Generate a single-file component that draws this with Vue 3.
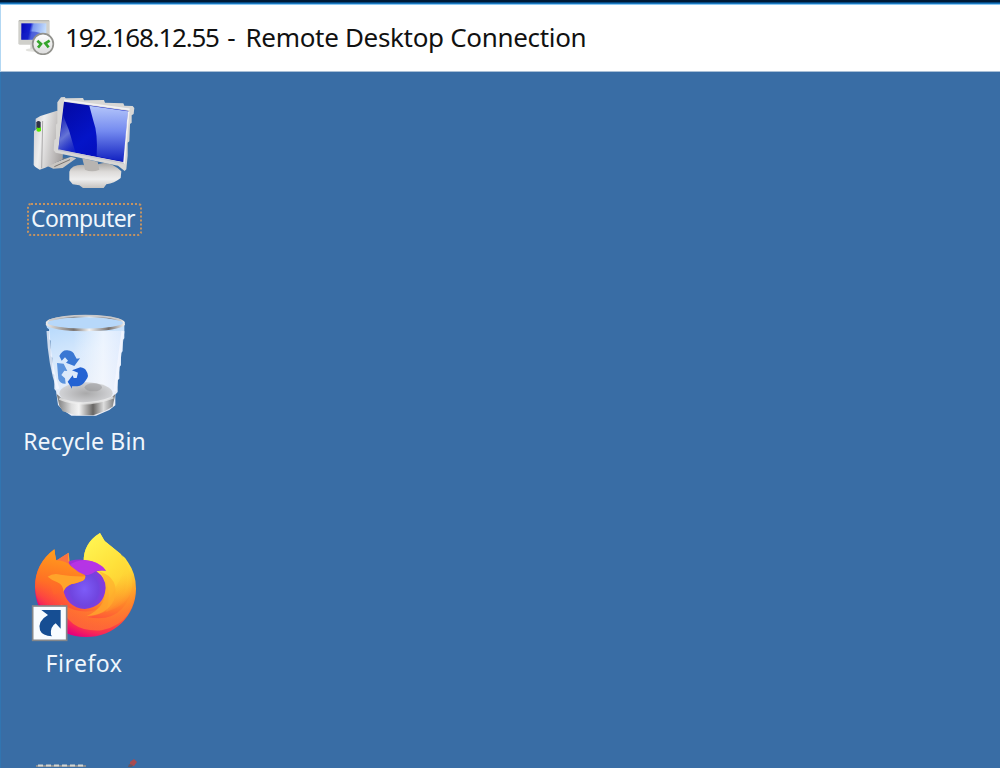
<script setup>
</script>

<template>
  <main class="window">
    <div class="frame"></div>
    <header class="titlebar">
      <svg class="rdp" viewBox="0 0 120 120">
        <defs>
          <linearGradient id="rs" x1="0" y1="0" x2="1" y2="0.15">
            <stop offset="0" stop-color="#0508b8" /><stop offset=".38" stop-color="#1420cf" />
            <stop offset=".5" stop-color="#7f9cf0" /><stop offset="1" stop-color="#c3dcfb" />
          </linearGradient>
          <linearGradient id="rf" x1="0" y1="0" x2="0" y2="1">
            <stop offset="0" stop-color="#fff" /><stop offset="1" stop-color="#dcdcdc" />
          </linearGradient>
        </defs>
        <ellipse cx="56" cy="105" rx="24" ry="5" fill="#e2e2de" />
        <path d="M46 88h24v14H46z" fill="#d5d5d1" />
        <rect x="10" y="15" width="94" height="74" rx="4" fill="#d0d0cb" />
        <path d="M12 17h90" stroke="#b9b9b3" stroke-width="4" />
        <rect x="19" y="25" width="75" height="49" fill="url(#rs)" />
        <path d="M19 56q35-15 75 5v13H19z" fill="#1420c4" opacity=".5" />
        <circle cx="84" cy="87" r="31" fill="url(#rf)" stroke="#92928d" stroke-width="5" />
        <path d="M67 77l11 10-9 11M104 77l-13 8 10 12" fill="none" stroke="#35a52b" stroke-width="8" />
      </svg>
      <h1 class="title"><span class="address">192.168.12.55</span><span class="dash"> - </span>Remote Desktop Connection</h1>
    </header>
    <section class="desktop">
      <div class="item">
        <svg class="icon" viewBox="0 -15 390 375">
          <defs>
            <linearGradient id="cs" x1="0" y1="0" x2="1" y2="1">
              <stop offset="0" stop-color="#0308a0" /><stop offset=".5" stop-color="#0414c8" /><stop offset="1" stop-color="#0309b0" />
            </linearGradient>
            <linearGradient id="cg" x1="0" y1="0" x2="0" y2="1">
              <stop offset="0" stop-color="#b4c6fa" /><stop offset=".45" stop-color="#758bf0" /><stop offset="1" stop-color="#1020c0" />
            </linearGradient>
            <linearGradient id="cl" x1=".3" y1="0" x2=".7" y2="1">
              <stop offset="0" stop-color="#7f8fdd" stop-opacity=".2" /><stop offset=".5" stop-color="#8f9fe2" stop-opacity=".7" /><stop offset="1" stop-color="#3444c4" stop-opacity=".3" />
            </linearGradient>
            <linearGradient id="ct" x1="0" y1="0" x2="1" y2=".3">
              <stop offset="0" stop-color="#cbc9cd" /><stop offset=".35" stop-color="#eeeeee" /><stop offset="1" stop-color="#aaa6a5" />
            </linearGradient>
            <linearGradient id="cb" x1="0" y1="0" x2="0" y2="1"><stop offset="0" stop-color="#aaa7a4" /><stop offset=".35" stop-color="#dddbd9" /><stop offset=".65" stop-color="#eeeeee" /><stop offset="1" stop-color="#c6c3c0" /></linearGradient>
          </defs>
          <path d="M77 241l30-9 46-17 16 5-41 29-28 2z" fill="#c9c6c2" />
          <path d="M88 238l48-19M103 245l47-21" stroke="#77736f" stroke-width="3" />
          <path d="M47 101l14-8 50-16 22 8-5 138-52 25-17 6-14-9-4-5 1-102 5-4z" fill="url(#ct)" />
          <path d="M68 108l-3 142" stroke="#aaa8a9" stroke-width="3" />
          <path d="M49 112q5-7 13-1v22H49z" fill="#303345" />
          <path d="M50 127q6 4 13 0v11q-7 5-13 0z" fill="#54e700" />
          <path d="M148 260q6-21 39-21 17 8 53-3 30-8 64 23l-2 20q-19 16-43 19l-8 11h-62l-11-8-20-3-10-12z" fill="url(#cb)" />
          <path d="M187 220l46 10 5 24q-22 10-43 0z" fill="#b7b4b1" />
          <path d="M123 37l11-1 3 4 52-1 3 7 60-1 3 8 55 2 3 7 25 1 5 6-2 18-6 4v22l-5 4-2 52-5 4v39l-4 41-5 5-20-16-187-39-6-7 2-31 5-4V119l4-4V52z" fill="#d8d7d5" />
          <path d="M132 50l194 28-15 153-196-37z" fill="url(#cs)" />
          <path d="M208 62l116 17-13 151-81-16q4-70-10-107z" fill="url(#cg)" />
          <path d="M129 91l18 45 20 69-52-11z" fill="url(#cl)" />
          <path d="M132 46l197 27M326 79l-14 157" fill="none" stroke="#f2f1f3" stroke-width="5" />
          <path d="M312 235l-197-40" stroke="#c6c6cf" stroke-width="4" />
        </svg>
        <span class="label focused">Computer</span>
      </div>
      <div class="item">
        <svg class="icon" viewBox="-30 -6 390 375">
          <defs>
            <linearGradient id="bb" x1="0" y1="0" x2=".25" y2="1">
              <stop offset="0" stop-color="#b4d8fc" /><stop offset=".4" stop-color="#d6e8fc" /><stop offset="1" stop-color="#eceef6" />
            </linearGradient>
            <linearGradient id="shine"><stop offset="0" stop-color="#f8faff" stop-opacity="0" /><stop offset=".6" stop-color="#f8faff" stop-opacity=".7" /><stop offset="1" stop-color="#e5edff" stop-opacity=".6" /></linearGradient>
            <linearGradient id="rim"><stop offset="0" stop-color="#e9e9e9" /><stop offset=".35" stop-color="#77716d" /><stop offset=".55" stop-color="#f4f4f4" /><stop offset=".8" stop-color="#756f6c" /><stop offset="1" stop-color="#eee" /></linearGradient>
            <linearGradient id="bf"><stop offset="0" stop-color="#777" /><stop offset=".25" stop-color="#ddd" /><stop offset=".38" stop-color="#f4f4f4" /><stop offset=".62" stop-color="#686664" /><stop offset=".8" stop-color="#ddd" /><stop offset="1" stop-color="#777" /></linearGradient>
            <radialGradient id="floor"><stop offset="0" stop-color="#a9a9aa" /><stop offset="1" stop-color="#d2d3d6" /></radialGradient>
          </defs>
          <path d="M48 56h235v44l-5 5v34l-5 5v37l-5 5v35l-5 5v35l-7 8v32l-18 14-40 17h-74l-28-19-12-13-6-42-5-6v-42l-6-6v-46l-5-5v-46l-5-5V73l-6-5z" fill="url(#bb)" />
          <path d="M130 78h149l-25 190H140z" fill="url(#shine)" />
          <path d="M54 78q5 104 30 174M279 78l-24 180" fill="none" stroke="#f4f6ff" stroke-width="9" opacity=".8" />
          <ellipse cx="168" cy="265" rx="80" ry="33" fill="url(#floor)" />
          <ellipse cx="190" cy="247" rx="26" ry="12" fill="#8e8e90" opacity=".45" />
          <path d="M80 267q25 27 82 27 68 0 94-27l-8 38-25 14-33 12h-52l-40-12-10-17z" fill="url(#bf)" />
          <path d="M88 281q73 30 162-4" fill="none" stroke="#efefef" stroke-width="7" opacity=".7" />
          <ellipse cx="166" cy="54" rx="116" ry="20" fill="#b7d8fa" stroke="url(#rim)" stroke-width="6" />
          <path d="M49 57q18 18 117 18 99 0 117-18" fill="none" stroke="url(#rim)" stroke-width="7" />
          <path d="M57 46q39-14 109-14 74 0 107 14" fill="none" stroke="#c9c9cb" stroke-width="5" />
          <path d="M88 153q9-19 24-17 18 1 22 15l6 10 10-1-17 23-25-10 6-6-9-10-10 10z" fill="#3977d3" />
          <path d="M81 174l20 2 11 22-9-1-9 13 11 10 2 16q-17 1-22-14z" fill="#5b93dd" />
          <path d="M126 196l25-9q14 2 18 11 10 14-1 27-10 17-26 19h-16v7l-13-21 15-19 3 8h9l4-16z" fill="#2463d3" />
        </svg>
        <span class="label bin">Recycle Bin</span>
      </div>
      <div class="item third">
        <svg class="icon" viewBox="0 0 390 375">
          <defs>
            <radialGradient id="fo" gradientUnits="userSpaceOnUse" cx="275" cy="75" r="300">
              <stop offset="0" stop-color="#ffec40" /><stop offset=".27" stop-color="#ffdb38" /><stop offset=".42" stop-color="#ffae2b" /><stop offset=".57" stop-color="#ff7f2a" /><stop offset=".73" stop-color="#ff4c3c" /><stop offset=".84" stop-color="#f92a55" /><stop offset=".93" stop-color="#e5007c" />
            </radialGradient>
            <radialGradient id="fp" cx=".5" cy=".6" r=".65"><stop offset="0" stop-color="#7d5cf8" /><stop offset=".5" stop-color="#7045df" /><stop offset="1" stop-color="#a42bd8" /></radialGradient>
            <linearGradient id="ft" x1=".2" y1="0" x2=".7" y2="1"><stop offset="0" stop-color="#fff653" /><stop offset=".5" stop-color="#ffe03a" /><stop offset="1" stop-color="#ffbd2d" stop-opacity="0" /></linearGradient>
            <linearGradient id="fl" gradientUnits="userSpaceOnUse" x1="120" y1="75" x2="80" y2="270"><stop offset="0" stop-color="#ffa01b" /><stop offset=".5" stop-color="#ff7025" /><stop offset="1" stop-color="#ff483b" stop-opacity="0" /></linearGradient>
            <linearGradient id="fc" x1=".8" y1="0" x2=".2" y2="1"><stop offset="0" stop-color="#ffb42a" stop-opacity="0" /><stop offset="1" stop-color="#ff792d" stop-opacity=".75" /></linearGradient>
          </defs>
          <path d="M103 73l5 34 38-24 3 29 42-4q0-54 49-84l14 24 49 40 5 25q0-15-2-22 12 8 18 21 24 34 24 79c0 82-66 145-150 145-87 0-153-67-153-149q0-70 58-114z" fill="url(#fo)" />
          <path d="M103 73l5 34 30 16 18 17-26 55q3 55 68 65-63 34-118 5-32-30-35-79 0-70 58-113z" fill="url(#fl)" />
          <path d="M191 108q0-54 49-84l14 24 49 40q40 62 32 105-10 48-77 68 18-50-2-105-28-44-65-48z" fill="url(#ft)" />
          <path d="M318 125q21 126-116 151 115 24 140-105 12 122-97 145-100 7-123-79 112 60 159-39 22-37 37-73z" fill="url(#fc)" />
          <path d="M237 139q65 20 45 87-24 46-82 47 62-28 57-91-3-27-20-43z" fill="#ffae2c" opacity=".65" />
          <path d="M133 117q26-17 61-12 45 5 64 32-16-2-29 2 28 18 28 50-5 58-63 63-55-5-65-61z" fill="url(#fp)" />
          <path d="M151 118q15-11 42-13 46 3 65 32-19-4-34 3-12 10-27 10-35-8-46-32z" fill="#bd34e6" opacity=".85" />
          <path d="M108 107l38-24q-4 22 3 37l13 15-32 14z" fill="#fa7241" />
          <path d="M103 73q2 22 6 33 29 0 47 20 17 16 39 24 4 9-5 16-17 9-34 11-18 7-26 20l-29 13-20-66z" fill="url(#fl)" />
          <path d="M83 155q16-12 39-6 34 6 74 5 0 9-7 13-23 8-35 10-18 8-24 24 0-22-18-29-13-4-29-17z" fill="#ffa42a" />
          <rect x="38" y="243" width="102" height="103" fill="#f8fcff" stroke="#85878a" stroke-width="5" />
          <path d="M64 255h58v56l-15-16q-17 11-14 34l3 5q-29-1-36-18-8-28 24-46z" fill="#164e93" />
        </svg>
        <span class="label firefox">Firefox</span>
      </div>
      <div class="item partial">
        <svg class="peek" viewBox="0 0 150 28">
          <path d="M26 26h50v2H26z" fill="#858d94" />
          <path d="M28 26.5h47" stroke="#d5d5d0" stroke-width="2" stroke-dasharray="5 3" />
          <path d="M120 23l4-3 3 3-3 4h-4z" fill="#a84b51" /><path d="M119 25l4 1-1 2h-4z" fill="#655663" />
        </svg>
      </div>
    </section>
  </main>
</template>

<style>
body { background: #396da5; overflow: hidden; }
</style>
<style scoped>
.window { width: 1000px; height: 768px; overflow: hidden; background: #396da5; font-family: "Noto Sans", "Open Sans", sans-serif; }
.frame { height: 5px; background: linear-gradient(#001a36 0 2px, #064982 2px 3px, #1976bd 3px 4px, #8bc8f3 4px); }
.titlebar { height: 67px; box-sizing: border-box; display: flex; align-items: center; padding: 0 0 2px 14px; background: #fff; border-left: 1px solid #b2d7f3; border-bottom: 1px solid #a9bfd6; }
.rdp { width: 40px; height: 40px; flex: none; margin-top: -4px; }
.title { margin: 0 0 0 10px; font-size: 26px; line-height: 36px; font-weight: 400; letter-spacing: -.32px; color: #111; white-space: nowrap; }
.address { letter-spacing: -1.22px; }
.dash { letter-spacing: 1.6px; }
.desktop { height: 696px; box-sizing: border-box; padding-top: 8px; border-left: 1px solid #3175b1; }
.item { width: 167px; height: 223px; display: flex; flex-direction: column; align-items: center; }
.third { height: 222px; margin-top: -1px; }
.icon { width: 130px; height: 125px; flex: none; display: block; margin-left: 1px; }
.label { color: #f0f6fc; font-size: 23px; line-height: 27px; white-space: nowrap; }
.bin { letter-spacing: .15px; }
.firefox { letter-spacing: .5px; margin-right: 1px; }
.focused { box-sizing: border-box; width: 115px; margin-top: -2px; padding-left: 2px; height: 33px; letter-spacing: -.65px; border: 2px dotted #c49362; border-radius: 4px; }
.partial { height: 28px; margin-top: -8px; }
.peek { width: 150px; height: 28px; flex: none; }
</style>
